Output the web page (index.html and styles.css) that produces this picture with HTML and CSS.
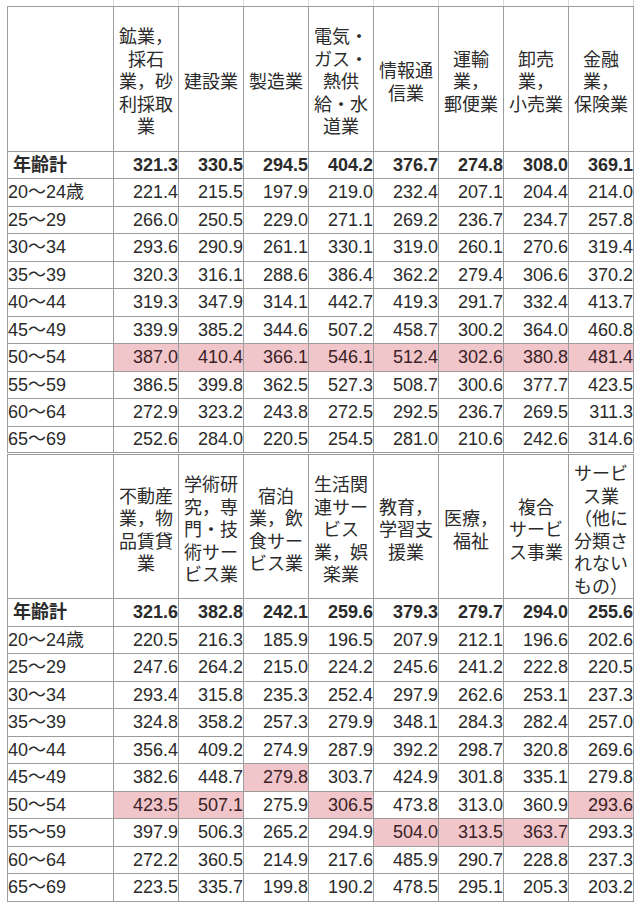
FILE: index.html
```html
<!DOCTYPE html>
<html lang="ja">
<head>
<meta charset="utf-8">
<title>産業別・年齢階級別賃金</title>
<link rel="stylesheet" href="styles.css">
</head>
<body>
<div class="sheet">
<table class="wage">
<colgroup>
<col class="c-label"><col class="c-num"><col class="c-num"><col class="c-num"><col class="c-num"><col class="c-num"><col class="c-num"><col class="c-num"><col class="c-num">
</colgroup>
<tbody>
<tr class="stub"><td class="blank"></td><td></td><td></td><td></td><td></td><td></td><td></td><td></td><td></td></tr>
<tr class="head">
<td></td>
<td>鉱業，<br>採石<br>業，砂<br>利採取<br>業</td>
<td>建設業</td>
<td>製造業</td>
<td>電気・<br>ガス・<br>熱供<br>給・水<br>道業</td>
<td>情報通<br>信業</td>
<td>運輸<br>業，<br>郵便業</td>
<td>卸売<br>業，<br>小売業</td>
<td>金融<br>業，<br>保険業</td>
</tr>
<tr class="row total"><td class="label">年齢計</td><td class="n">321.3</td><td class="n">330.5</td><td class="n">294.5</td><td class="n">404.2</td><td class="n">376.7</td><td class="n">274.8</td><td class="n">308.0</td><td class="n">369.1</td></tr>
<tr class="row"><td class="label sub">20～24歳</td><td class="n">221.4</td><td class="n">215.5</td><td class="n">197.9</td><td class="n">219.0</td><td class="n">232.4</td><td class="n">207.1</td><td class="n">204.4</td><td class="n">214.0</td></tr>
<tr class="row"><td class="label sub">25～29</td><td class="n">266.0</td><td class="n">250.5</td><td class="n">229.0</td><td class="n">271.1</td><td class="n">269.2</td><td class="n">236.7</td><td class="n">234.7</td><td class="n">257.8</td></tr>
<tr class="row"><td class="label sub">30～34</td><td class="n">293.6</td><td class="n">290.9</td><td class="n">261.1</td><td class="n">330.1</td><td class="n">319.0</td><td class="n">260.1</td><td class="n">270.6</td><td class="n">319.4</td></tr>
<tr class="row"><td class="label sub">35～39</td><td class="n">320.3</td><td class="n">316.1</td><td class="n">288.6</td><td class="n">386.4</td><td class="n">362.2</td><td class="n">279.4</td><td class="n">306.6</td><td class="n">370.2</td></tr>
<tr class="row"><td class="label sub">40～44</td><td class="n">319.3</td><td class="n">347.9</td><td class="n">314.1</td><td class="n">442.7</td><td class="n">419.3</td><td class="n">291.7</td><td class="n">332.4</td><td class="n">413.7</td></tr>
<tr class="row"><td class="label sub">45～49</td><td class="n">339.9</td><td class="n">385.2</td><td class="n">344.6</td><td class="n">507.2</td><td class="n">458.7</td><td class="n">300.2</td><td class="n">364.0</td><td class="n">460.8</td></tr>
<tr class="row"><td class="label sub">50～54</td><td class="n hl">387.0</td><td class="n hl">410.4</td><td class="n hl">366.1</td><td class="n hl">546.1</td><td class="n hl">512.4</td><td class="n hl">302.6</td><td class="n hl">380.8</td><td class="n hl">481.4</td></tr>
<tr class="row"><td class="label sub">55～59</td><td class="n">386.5</td><td class="n">399.8</td><td class="n">362.5</td><td class="n">527.3</td><td class="n">508.7</td><td class="n">300.6</td><td class="n">377.7</td><td class="n">423.5</td></tr>
<tr class="row"><td class="label sub">60～64</td><td class="n">272.9</td><td class="n">323.2</td><td class="n">243.8</td><td class="n">272.5</td><td class="n">292.5</td><td class="n">236.7</td><td class="n">269.5</td><td class="n">311.3</td></tr>
<tr class="row"><td class="label sub">65～69</td><td class="n">252.6</td><td class="n">284.0</td><td class="n">220.5</td><td class="n">254.5</td><td class="n">281.0</td><td class="n">210.6</td><td class="n">242.6</td><td class="n">314.6</td></tr>
<tr class="head second">
<td></td>
<td>不動産<br>業，物<br>品賃貸<br>業</td>
<td>学術研<br>究，専<br>門・技<br>術サー<br>ビス業</td>
<td>宿泊<br>業，飲<br>食サー<br>ビス業</td>
<td>生活関<br>連サー<br>ビス<br>業，娯<br>楽業</td>
<td>教育，<br>学習支<br>援業</td>
<td>医療，<br>福祉</td>
<td>複合<br>サービ<br>ス事業</td>
<td>サービ<br>ス業<br>（他に<br>分類さ<br>れない<br>もの）</td>
</tr>
<tr class="row total"><td class="label">年齢計</td><td class="n">321.6</td><td class="n">382.8</td><td class="n">242.1</td><td class="n">259.6</td><td class="n">379.3</td><td class="n">279.7</td><td class="n">294.0</td><td class="n">255.6</td></tr>
<tr class="row"><td class="label sub">20～24歳</td><td class="n">220.5</td><td class="n">216.3</td><td class="n">185.9</td><td class="n">196.5</td><td class="n">207.9</td><td class="n">212.1</td><td class="n">196.6</td><td class="n">202.6</td></tr>
<tr class="row"><td class="label sub">25～29</td><td class="n">247.6</td><td class="n">264.2</td><td class="n">215.0</td><td class="n">224.2</td><td class="n">245.6</td><td class="n">241.2</td><td class="n">222.8</td><td class="n">220.5</td></tr>
<tr class="row"><td class="label sub">30～34</td><td class="n">293.4</td><td class="n">315.8</td><td class="n">235.3</td><td class="n">252.4</td><td class="n">297.9</td><td class="n">262.6</td><td class="n">253.1</td><td class="n">237.3</td></tr>
<tr class="row"><td class="label sub">35～39</td><td class="n">324.8</td><td class="n">358.2</td><td class="n">257.3</td><td class="n">279.9</td><td class="n">348.1</td><td class="n">284.3</td><td class="n">282.4</td><td class="n">257.0</td></tr>
<tr class="row"><td class="label sub">40～44</td><td class="n">356.4</td><td class="n">409.2</td><td class="n">274.9</td><td class="n">287.9</td><td class="n">392.2</td><td class="n">298.7</td><td class="n">320.8</td><td class="n">269.6</td></tr>
<tr class="row"><td class="label sub">45～49</td><td class="n">382.6</td><td class="n">448.7</td><td class="n hl">279.8</td><td class="n">303.7</td><td class="n">424.9</td><td class="n">301.8</td><td class="n">335.1</td><td class="n">279.8</td></tr>
<tr class="row"><td class="label sub">50～54</td><td class="n hl">423.5</td><td class="n hl">507.1</td><td class="n">275.9</td><td class="n hl">306.5</td><td class="n">473.8</td><td class="n">313.0</td><td class="n">360.9</td><td class="n hl">293.6</td></tr>
<tr class="row"><td class="label sub">55～59</td><td class="n">397.9</td><td class="n">506.3</td><td class="n">265.2</td><td class="n">294.9</td><td class="n hl">504.0</td><td class="n hl">313.5</td><td class="n hl">363.7</td><td class="n">293.3</td></tr>
<tr class="row"><td class="label sub">60～64</td><td class="n">272.2</td><td class="n">360.5</td><td class="n">214.9</td><td class="n">217.6</td><td class="n">485.9</td><td class="n">290.7</td><td class="n">228.8</td><td class="n">237.3</td></tr>
<tr class="row"><td class="label sub">65～69</td><td class="n">223.5</td><td class="n">335.7</td><td class="n">199.8</td><td class="n">190.2</td><td class="n">478.5</td><td class="n">295.1</td><td class="n">205.3</td><td class="n">203.2</td></tr>
</tbody>
</table>
</div>
</body>
</html>
```

FILE: styles.css
```css
html, body {
  margin: 0;
  padding: 0;
  background: #ffffff;
}

body {
  font-family: "Liberation Sans", "Noto Sans CJK JP", sans-serif;
  color: #2b2b2b;
}

.sheet {
  padding: 0 0 0 7px;
}

.wage {
  border-collapse: collapse;
  table-layout: fixed;
  width: 627px;
}

.c-label {
  width: 106px;
}

.c-num {
  width: 65px;
}

.wage td {
  border: 1px solid #9c9c9c;
  padding: 0;
  font-size: 18px;
  line-height: 20px;
  white-space: nowrap;
}

.stub {
  height: 6px;
}

.stub td {
  border-top: none;
  border-left-color: #dcdcdc;
  border-right-color: #dcdcdc;
}

.stub td.blank {
  border-left: none;
}

.head {
  height: 145px;
}

.head td {
  text-align: center;
  vertical-align: middle;
  line-height: 22.5px;
  padding-top: 8px;
}

.second td {
  border-top: 3px double #9c9c9c;
}

.row {
  height: 27.5px;
}

.row td {
  vertical-align: middle;
}

.label {
  text-align: left;
  padding-left: 9px;
}

.total .label {
  padding-left: 5px;
}

.total td {
  font-weight: bold;
}

.n {
  text-align: right;
  padding-right: 3px;
}

.hl {
  background: #f1c6ca;
  color: #3a2226;
}
```
